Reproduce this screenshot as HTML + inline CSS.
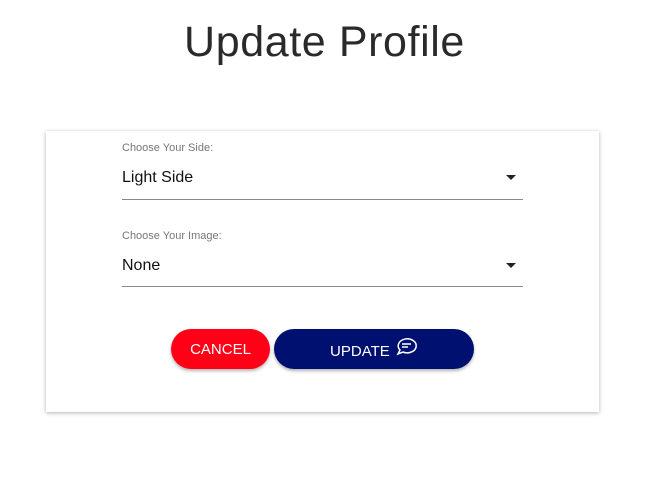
<!DOCTYPE html>
<html><head><style>
body{margin:0;width:649px;height:491px;background:#fff;font-family:"Liberation Sans",sans-serif;position:relative;overflow:hidden}
h1{position:absolute;top:17px;left:0;width:649px;text-align:center;margin:0;font-weight:normal;font-size:43px;letter-spacing:0.6px;color:#2a2a2a;line-height:50px}
.card{position:absolute;left:46px;top:131px;width:553px;height:281px;background:#fff;box-shadow:0 1px 4px rgba(0,0,0,.3)}
.lbl{position:absolute;left:122px;font-size:11px;color:#777}
.val{position:absolute;left:122px;font-size:16px;color:#111}
.line{position:absolute;left:122px;width:401px;height:1px;background:#888}
.arr{position:absolute;left:506px;width:0;height:0;border-left:5px solid transparent;border-right:5px solid transparent;border-top:5px solid #222}
.btn{position:absolute;top:329px;height:40px;border-radius:20px;color:#fff;font-size:15px;display:flex;align-items:center;justify-content:center;box-shadow:0 2px 3px rgba(0,0,0,.3)}
</style></head><body>
<h1>Update Profile</h1>
<div class="card"></div>
<div class="lbl" style="top:142px">Choose Your Side:</div>
<div class="val" style="top:169px">Light Side</div>
<div class="arr" style="top:175px"></div>
<div class="line" style="top:199px"></div>
<div class="lbl" style="top:230px">Choose Your Image:</div>
<div class="val" style="top:257px">None</div>
<div class="arr" style="top:263px"></div>
<div class="line" style="top:286px"></div>
<div class="btn" style="left:171px;width:99px;background:#ff0016">CANCEL</div>
<div class="btn" style="left:274px;width:200px;background:#001070"><span style="margin-top:4px">UPDATE</span>&nbsp;<svg width="24" height="22" viewBox="0 0 24 22" fill="none" stroke="#fff" stroke-width="1.5" style="margin-top:-4px"><path d="M4 18 L6 14 A9 7 0 1 1 9 16 Z"/><path d="M8 8h9M8 11h6"/></svg></div>
</body></html>
